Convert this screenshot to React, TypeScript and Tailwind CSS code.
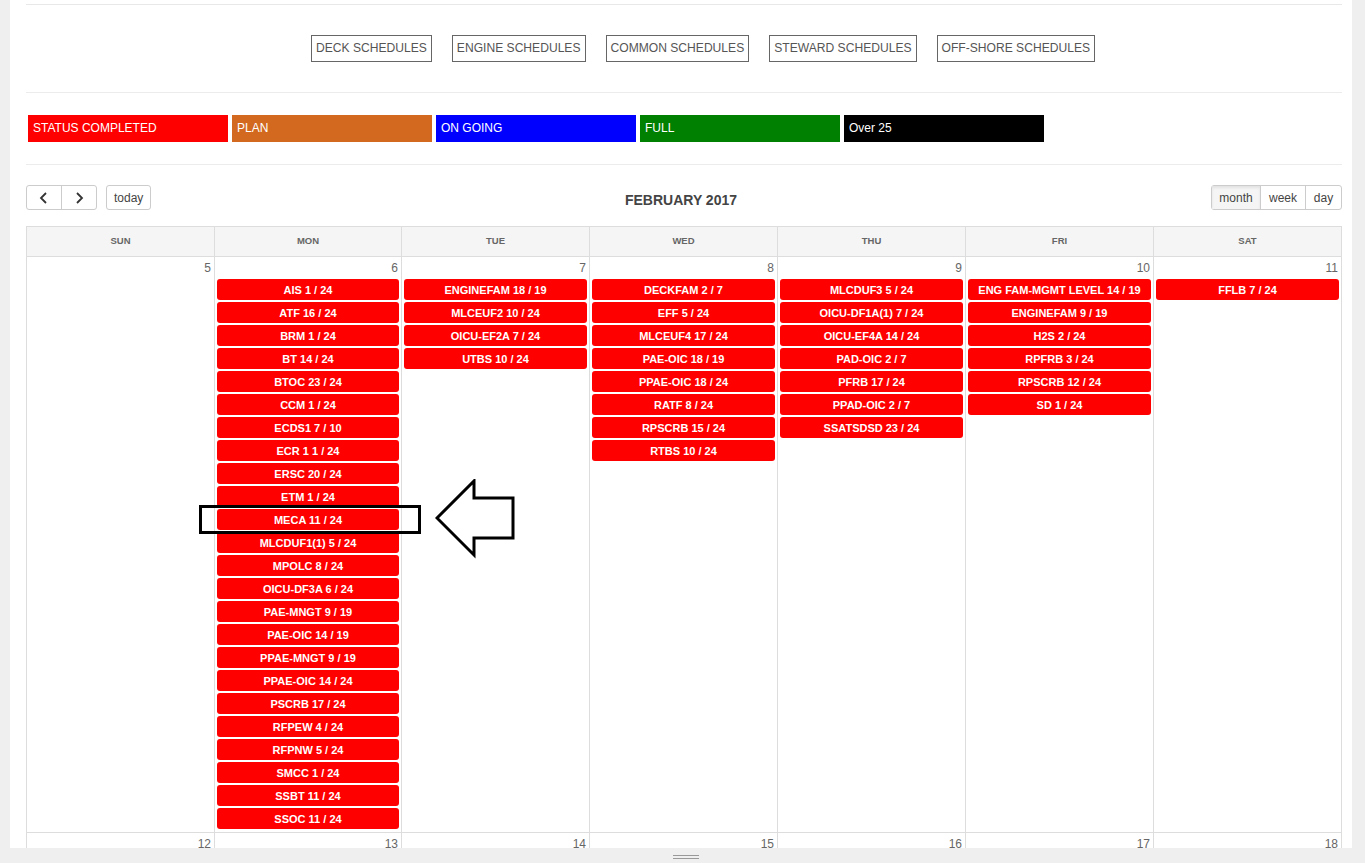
import React from "react";

const scheduleLinks = [
  "DECK SCHEDULES",
  "ENGINE SCHEDULES",
  "COMMON SCHEDULES",
  "STEWARD SCHEDULES",
  "OFF-SHORE SCHEDULES",
];

const legend = [
  { label: "STATUS COMPLETED", bg: "bg-[#ff0000]" },
  { label: "PLAN", bg: "bg-[#d2691e]" },
  { label: "ON GOING", bg: "bg-[#0000ff]" },
  { label: "FULL", bg: "bg-[#008000]" },
  { label: "Over 25", bg: "bg-black" },
];

const days = ["SUN", "MON", "TUE", "WED", "THU", "FRI", "SAT"];

const week1: { day: number; events: string[] }[] = [
  { day: 5, events: [] },
  {
    day: 6,
    events: [
      "AIS 1 / 24",
      "ATF 16 / 24",
      "BRM 1 / 24",
      "BT 14 / 24",
      "BTOC 23 / 24",
      "CCM 1 / 24",
      "ECDS1 7 / 10",
      "ECR 1 1 / 24",
      "ERSC 20 / 24",
      "ETM 1 / 24",
      "MECA 11 / 24",
      "MLCDUF1(1) 5 / 24",
      "MPOLC 8 / 24",
      "OICU-DF3A 6 / 24",
      "PAE-MNGT 9 / 19",
      "PAE-OIC 14 / 19",
      "PPAE-MNGT 9 / 19",
      "PPAE-OIC 14 / 24",
      "PSCRB 17 / 24",
      "RFPEW 4 / 24",
      "RFPNW 5 / 24",
      "SMCC 1 / 24",
      "SSBT 11 / 24",
      "SSOC 11 / 24",
    ],
  },
  {
    day: 7,
    events: ["ENGINEFAM 18 / 19", "MLCEUF2 10 / 24", "OICU-EF2A 7 / 24", "UTBS 10 / 24"],
  },
  {
    day: 8,
    events: [
      "DECKFAM 2 / 7",
      "EFF 5 / 24",
      "MLCEUF4 17 / 24",
      "PAE-OIC 18 / 19",
      "PPAE-OIC 18 / 24",
      "RATF 8 / 24",
      "RPSCRB 15 / 24",
      "RTBS 10 / 24",
    ],
  },
  {
    day: 9,
    events: [
      "MLCDUF3 5 / 24",
      "OICU-DF1A(1) 7 / 24",
      "OICU-EF4A 14 / 24",
      "PAD-OIC 2 / 7",
      "PFRB 17 / 24",
      "PPAD-OIC 2 / 7",
      "SSATSDSD 23 / 24",
    ],
  },
  {
    day: 10,
    events: [
      "ENG FAM-MGMT LEVEL 14 / 19",
      "ENGINEFAM 9 / 19",
      "H2S 2 / 24",
      "RPFRB 3 / 24",
      "RPSCRB 12 / 24",
      "SD 1 / 24",
    ],
  },
  { day: 11, events: ["FFLB 7 / 24"] },
];

const week2 = [12, 13, 14, 15, 16, 17, 18];

export default function App() {
  return (
    <div
      className="h-[863px] w-[1365px] overflow-hidden bg-[#efefef] flex flex-col"
      style={{ fontFamily: '"Liberation Sans", Arial, sans-serif' }}
    >
      <div className="flex-1 min-h-0 overflow-hidden ml-[10px] mr-[13px] bg-white pl-4 pr-[10px] relative">
        <div className="mt-[4px] border-t border-[#e8e8e8]" />

        {/* Schedule links */}
        <div className="flex justify-center gap-5 pl-[38px] pt-[30px] pb-[30px]">
          {scheduleLinks.map((s) => (
            <div
              key={s}
              className="border border-[#666] px-[4px] h-[27px] flex items-center text-[12.1px] text-[#555]"
            >
              {s}
            </div>
          ))}
        </div>

        <div className="border-t border-[#ececec]" />

        {/* Legend */}
        <div className="flex gap-1 pl-[2px] pt-[22px] pb-[22px]">
          {legend.map((l) => (
            <div
              key={l.label}
              className={`${l.bg} w-[200px] h-[27px] flex items-center px-[5px] pb-[1px] text-[12px] text-white`}
            >
              {l.label}
            </div>
          ))}
        </div>

        <div className="border-t border-[#ececec]" />

        {/* Toolbar */}
        <div className="flex items-center justify-between h-[61px] pt-[20px] pb-[16px]">
          <div className="flex items-center gap-[9px] w-[300px]">
            <div className="flex h-[25px] border border-[#ccc] rounded-[3px] text-[#333]">
              <div className="w-[35px] flex items-center justify-center border-r border-[#ccc]">
                <svg width="10" height="12" viewBox="0 0 10 12" fill="none" stroke="#333" strokeWidth="1.8">
                  <path d="M7 1 L2 6 L7 11" />
                </svg>
              </div>
              <div className="w-[34px] flex items-center justify-center">
                <svg width="10" height="12" viewBox="0 0 10 12" fill="none" stroke="#333" strokeWidth="1.8">
                  <path d="M3 1 L8 6 L3 11" />
                </svg>
              </div>
            </div>
            <div className="h-[25px] px-[7px] border border-[#ccc] rounded-[3px] flex items-center text-[12px] text-[#444]">
              today
            </div>
          </div>
          <div className="text-[14px] leading-[16px] font-bold text-[#444] mt-[5px] mr-[6px]">FEBRUARY 2017</div>
          <div className="w-[300px] flex justify-end">
            <div className="flex h-[25px] border border-[#ccc] rounded-[3px] text-[12px] text-[#444]">
              <div className="w-[49px] flex items-center justify-center bg-[#f5f5f5] border-r border-[#ccc] shadow-[inset_0_2px_3px_rgba(0,0,0,0.08)]">
                month
              </div>
              <div className="w-[45px] flex items-center justify-center border-r border-[#ccc]">week</div>
              <div className="w-[35px] flex items-center justify-center">day</div>
            </div>
          </div>
        </div>

        {/* Calendar */}
        <div className="w-[1316px] border border-[#ddd]">
          <div className="grid grid-cols-[187px_187px_188px_188px_188px_188px_188px] bg-[#f5f5f5] border-b border-[#ddd]">
            {days.map((d, i) => (
              <div
                key={d}
                className={`h-[29px] flex items-center justify-center text-[9.5px] font-bold text-[#666] ${
                  i > 0 ? "border-l border-[#ddd]" : ""
                }`}
              >
                {d}
              </div>
            ))}
          </div>
          <div className="grid grid-cols-[187px_187px_188px_188px_188px_188px_188px] border-b border-[#ddd]">
            {week1.map((c, i) => (
              <div key={c.day} className={`pb-[1px] ${i > 0 ? "border-l border-[#ddd]" : ""}`}>
                <div className="h-[22px] pr-[3px] pt-[3px] text-right text-[12px] leading-[16px] text-[#666]">
                  {c.day}
                </div>
                <div className="flex flex-col gap-[2px] pl-[2px] pr-[2px]">
                  {c.events.map((e) => (
                    <div
                      key={e}
                      className="h-[21px] rounded-[3px] bg-[#ff0000] flex items-center justify-center pt-[1px] text-[11px] font-bold text-white whitespace-nowrap"
                    >
                      {e}
                    </div>
                  ))}
                </div>
                {c.events.length === 24 ? <div className="h-[2px]" /> : null}
              </div>
            ))}
          </div>
          <div className="grid grid-cols-[187px_187px_188px_188px_188px_188px_188px] h-[60px]">
            {week2.map((d, i) => (
              <div key={d} className={`${i > 0 ? "border-l border-[#ddd]" : ""}`}>
                <div className="h-[22px] pr-[3px] pt-[3px] text-right text-[12px] leading-[16px] text-[#666]">
                  {d}
                </div>
              </div>
            ))}
          </div>
        </div>

        {/* Annotation */}
        <div className="absolute left-[189px] top-[505px] w-[222px] h-[29px] border-[3px] border-black" />
        <svg
          className="absolute left-[425px] top-[479px]"
          width="80"
          height="80"
          viewBox="0 0 80 80"
          fill="none"
          stroke="black"
          strokeWidth="3"
        >
          <path d="M2 39 L39 2 L39 19 L78 19 L78 59 L39 59 L39 76 Z" strokeLinejoin="miter" />
        </svg>
      </div>

      {/* Bottom bar */}
      <div className="h-[15px] shrink-0 flex justify-center pt-[7px]">
        <div className="w-[26px] flex flex-col gap-[2px] ml-[6px]">
          <div className="h-[1px] bg-[#999]" />
          <div className="h-[1px] bg-[#999]" />
        </div>
      </div>
    </div>
  );
}
